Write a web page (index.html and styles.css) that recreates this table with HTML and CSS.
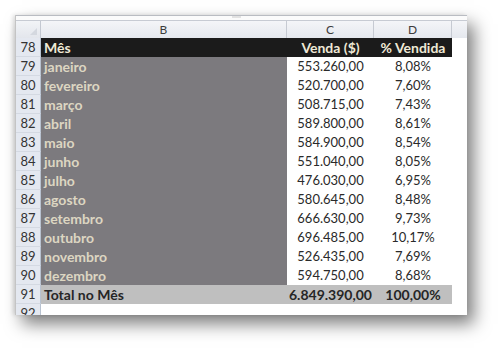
FILE: index.html
```html
<!DOCTYPE html>
<html lang="pt">
<head>
<meta charset="utf-8">
<title>Vendas por mês</title>
<link rel="stylesheet" href="styles.css">
</head>
<body>
<div class="sheet">
  <div class="strip"><span class="split"></span></div>
  <div class="grid">
    <div class="corner"><span class="tri"></span></div>
    <div class="colh">B</div>
    <div class="colh">C</div>
    <div class="colh">D</div>
    <div class="colh extra"></div>

    <div class="rh">78</div>
    <div class="c hdr left">Mês</div>
    <div class="c hdr">Venda ($)</div>
    <div class="c hdr">% Vendida</div>
    <div class="c blank"></div>

    <div class="rh">79</div><div class="c mon">janeiro</div><div class="c val">553.260,00</div><div class="c val">8,08%</div><div class="c blank"></div>
    <div class="rh">80</div><div class="c mon">fevereiro</div><div class="c val">520.700,00</div><div class="c val">7,60%</div><div class="c blank"></div>
    <div class="rh">81</div><div class="c mon">março</div><div class="c val">508.715,00</div><div class="c val">7,43%</div><div class="c blank"></div>
    <div class="rh">82</div><div class="c mon">abril</div><div class="c val">589.800,00</div><div class="c val">8,61%</div><div class="c blank"></div>
    <div class="rh">83</div><div class="c mon">maio</div><div class="c val">584.900,00</div><div class="c val">8,54%</div><div class="c blank"></div>
    <div class="rh">84</div><div class="c mon">junho</div><div class="c val">551.040,00</div><div class="c val">8,05%</div><div class="c blank"></div>
    <div class="rh">85</div><div class="c mon">julho</div><div class="c val">476.030,00</div><div class="c val">6,95%</div><div class="c blank"></div>
    <div class="rh">86</div><div class="c mon">agosto</div><div class="c val">580.645,00</div><div class="c val">8,48%</div><div class="c blank"></div>
    <div class="rh">87</div><div class="c mon">setembro</div><div class="c val">666.630,00</div><div class="c val">9,73%</div><div class="c blank"></div>
    <div class="rh">88</div><div class="c mon">outubro</div><div class="c val">696.485,00</div><div class="c val">10,17%</div><div class="c blank"></div>
    <div class="rh">89</div><div class="c mon">novembro</div><div class="c val">526.435,00</div><div class="c val">7,69%</div><div class="c blank"></div>
    <div class="rh">90</div><div class="c mon">dezembro</div><div class="c val">594.750,00</div><div class="c val">8,68%</div><div class="c blank"></div>

    <div class="rh">91</div>
    <div class="c tot left">Total no Mês</div>
    <div class="c tot">6.849.390,00</div>
    <div class="c tot">100,00%</div>
    <div class="c blank"></div>

    <div class="rh">92</div><div class="c blank"></div><div class="c blank"></div><div class="c blank"></div><div class="c blank"></div>
  </div>
</div>
</body>
</html>
```

FILE: styles.css
```css
html, body {
  margin: 0;
  padding: 0;
  background: #ffffff;
}

body {
  font-family: Lato, "Open Sans", "Liberation Sans", sans-serif;
  width: 500px;
  height: 348px;
  overflow: hidden;
}

.sheet {
  margin: 15px 0 0 15px;
  width: 451px;
  height: 300px;
  overflow: hidden;
  background: #ffffff;
  border-left: 1px solid #c4c4c4;
  box-shadow: 7px 9px 16px rgba(0, 0, 0, 0.5), -2px 0 4px rgba(0, 0, 0, 0.12);
}

.strip {
  height: 4px;
  border-top: 1px solid #b9bcc2;
  border-bottom: 1px solid #c7cbd3;
  background: #fbfbfb;
  position: relative;
}

.split {
  position: absolute;
  left: 216px;
  top: 0;
  width: 9px;
  height: 2px;
  background: #e2e2e2;
}

.grid {
  display: grid;
  grid-template-columns: 25px 246px 87px 78px 1fr;
  grid-template-rows: 17px repeat(15, 19px);
}

.corner {
  background: linear-gradient(#f2f4f7, #e3e6ec);
  border-right: 1px solid #c3c8d1;
  position: relative;
}

.tri {
  position: absolute;
  right: 3px;
  bottom: 3px;
  width: 0;
  height: 0;
  border-left: 7px solid transparent;
  border-bottom: 7px solid #d4d8df;
}

.colh {
  background: linear-gradient(#f4f5f8, #e5e8ee);
  border-right: 1px solid #c6cad2;
  color: #3c3c3c;
  font-size: 12px;
  line-height: 17px;
  text-align: center;
}

.colh.extra {
  border-right: none;
}

.rh {
  background: #e4e8f0;
  border-right: 1px solid #b8c2d0;
  border-bottom: 1px solid #d4d9e2;
  color: #333333;
  font-size: 13px;
  line-height: 19px;
  text-align: center;
}

.c {
  font-size: 14px;
  line-height: 19px;
  text-align: center;
  white-space: nowrap;
  overflow: hidden;
  color: #222222;
}

.left {
  text-align: left;
  padding-left: 3px;
}

.hdr {
  background: #1b1b1b;
  color: #efe9d6;
  font-weight: 700;
}

.mon {
  background: #7c7a7e;
  color: #ddd6c2;
  font-weight: 700;
  text-align: left;
  padding-left: 3px;
}

.val {
  background: #ffffff;
  color: #2a2a2a;
  font-size: 13px;
}

.tot {
  background: #bfbfbf;
  color: #262626;
  font-weight: 700;
}

.blank {
  background: #ffffff;
}
```
